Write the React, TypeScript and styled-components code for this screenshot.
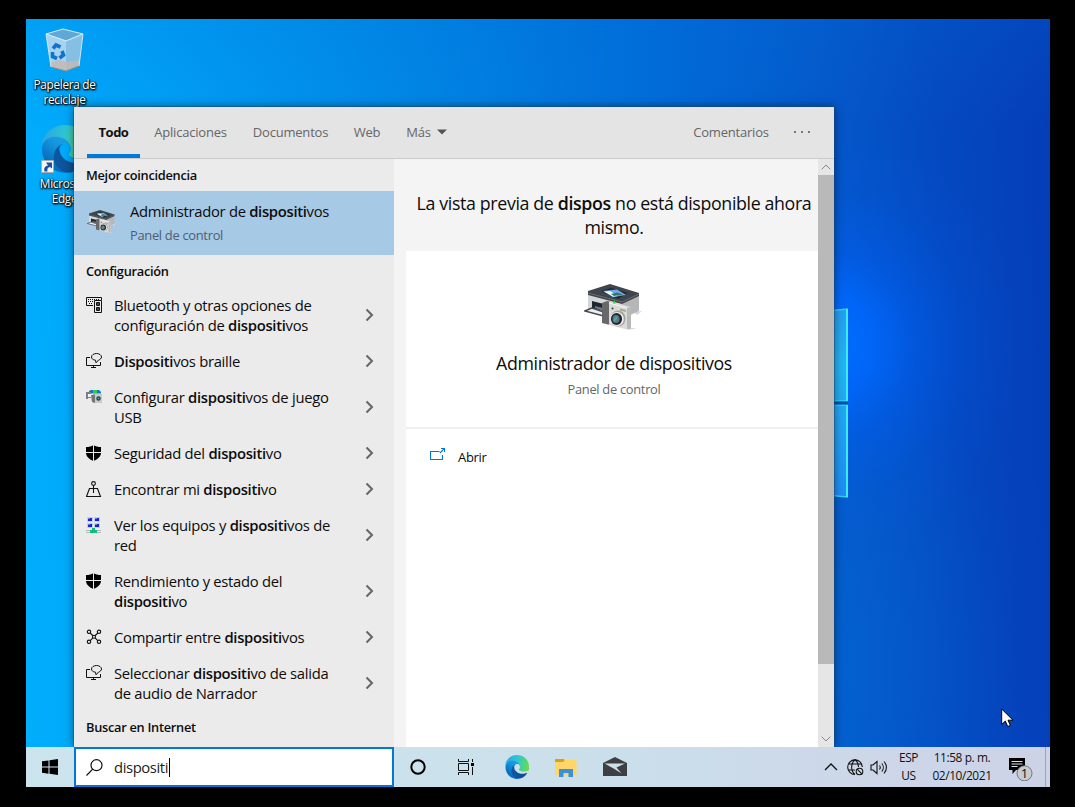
import React, { type ReactNode } from 'react';
import styled, { createGlobalStyle } from 'styled-components';

const Global = createGlobalStyle`
  *, *::before, *::after { box-sizing: border-box; }
  body { margin: 0; background: #000; }
  body, input { font-family: 'Open Sans', 'Noto Sans', sans-serif; }
`;

const Screen = styled.div`
  width: 1075px;
  height: 807px;
  padding: 19px 25px 20px 26px;
  background: #000;
  overflow: hidden;
`;

const Desktop = styled.main`
  position: relative;
  display: grid;
  grid-template-rows: 1fr 40px;
  width: 1024px;
  height: 768px;
  overflow: hidden;
`;

const Wallpaper = styled.section`
  position: relative;
  overflow: hidden;
  background:
    radial-gradient(ellipse 190px 210px at 805px 325px, rgba(0, 112, 255, 1), rgba(0, 104, 255, 0.85) 22%, rgba(0, 96, 245, 0.45) 45%, rgba(0, 90, 235, 0.15) 72%, rgba(0, 85, 225, 0) 100%),
    radial-gradient(ellipse 200px 330px at 790px 640px, rgba(4, 105, 212, 0.55), rgba(4, 100, 210, 0) 100%),
    linear-gradient(180deg, rgba(0, 110, 215, 0.18) 0, rgba(0, 120, 230, 0) 110px),
    linear-gradient(88deg, #00aefc 0%, #00a0f6 15%, #0088e6 38%, #006cd8 62%, #0456c9 80%, #0449c1 89%, #043db7 100%);
`;

const WindowsBeam = styled.svg`
  position: absolute;
  left: 780px;
  top: 280px;
`;

const IconColumn = styled.div`
  display: flex;
  flex-direction: column;
  gap: 18px;
  width: 77px;
  padding-top: 9px;
`;

const Shortcut = styled.div<{ $labelGap: number }>`
  display: flex;
  flex-direction: column;
  align-items: center;
  gap: ${p => p.$labelGap}px;
  position: relative;
`;

const ShortcutLabel = styled.span`
  width: 76px;
  text-align: center;
  color: #fff;
  font-size: 11.9px;
  line-height: 15px;
  letter-spacing: -0.35px;
  text-shadow: 1px 1px 2px #000, 0 1px 2px #000, 1px 0 1px rgba(0, 0, 0, 0.8), 0 0 2px rgba(0, 0, 0, 0.5);
`;

const SearchPanel = styled.section`
  position: absolute;
  left: 48px;
  top: 88px;
  display: grid;
  grid-template-rows: 52px 588px;
  width: 760px;
  height: 640px;
  background: #ebebeb;
  box-shadow: 0 0 0 1px rgba(30, 70, 110, 0.45), 0 0 9px rgba(0, 0, 0, 0.5);
  clip-path: inset(-12px -12px 0 -12px);
`;

const TabBar = styled.nav`
  display: flex;
  align-items: stretch;
  padding: 0 0 0 13px;
  background: #e4e4e4;
  border-bottom: 1px solid #cbcbcb;
`;

const Tab = styled.button<{ $active?: boolean; $width: number }>`
  display: flex;
  align-items: center;
  justify-content: center;
  gap: 6px;
  width: ${p => p.$width}px;
  padding: 3px 0 0;
  border: 0;
  border-bottom: 4px solid ${p => (p.$active ? '#0078d7' : 'transparent')};
  background: none;
  color: ${p => (p.$active ? '#111' : '#666')};
  font: ${p => (p.$active ? 700 : 400)} 13px 'Open Sans', sans-serif;
  line-height: 17px;
  letter-spacing: ${p => (p.$active ? -0.5 : -0.2)}px;
  white-space: nowrap;
`;

const TabSpacer = styled.div`
  flex: 1;
`;

const Body = styled.div`
  display: grid;
  grid-template-columns: 320px 424px 16px;
  overflow: hidden;
`;

const Results = styled.div`
  overflow: hidden;
  color: #0c0c0c;
`;

const GroupTitle = styled.h2`
  margin: 0;
  height: 32px;
  padding: 0 0 0 12px;
  font-size: 12.8px;
  font-weight: 600;
  line-height: 32px;
  letter-spacing: -0.28px;
  white-space: nowrap;
`;

const BestMatch = styled.div`
  display: grid;
  grid-template-columns: 32px 1fr;
  column-gap: 12px;
  height: 64px;
  padding: 9px 12px 0;
  background: #a6c9e6;
`;

const BestIcon = styled.div`
  padding: 10px 0 0 1px;
`;

const Line = styled.div`
  white-space: nowrap;
`;

const BestText = styled.div`
  font-size: 14.8px;
  line-height: 22px;
  letter-spacing: -0.3px;
`;

const Caption = styled.div`
  padding-top: 2px;
  color: #4d5f6e;
  font-size: 12.9px;
  line-height: 22px;
  white-space: nowrap;
`;

const Strong = styled.b`
  font-weight: 600;
`;

const Row = styled.div`
  display: grid;
  grid-template-columns: 16px 1fr 10px;
  column-gap: 12px;
  padding: 8px 19px 8px 12px;
  font-size: 14.8px;
  line-height: 20px;
  letter-spacing: -0.29px;
`;

const RowText = styled.div`
  min-width: 0;
`;

const RowIcon = styled.svg`
  margin-top: 2px;
`;

const RowChevron = styled.svg`
  align-self: center;
`;

const Preview = styled.div`
  padding-left: 12px;
  overflow: hidden;
  background: #f4f4f4;
`;

const PreviewInner = styled.div`
  display: flex;
  flex-direction: column;
  width: 416px;
  height: 100%;
  text-align: center;
  color: #0c0c0c;
`;

const Notice = styled.div`
  height: 92px;
  padding-top: 32px;
  font-size: 17.8px;
  line-height: 24px;
  letter-spacing: -0.36px;
`;

const Card = styled.div`
  display: flex;
  flex-direction: column;
  align-items: center;
  height: 178px;
  padding-top: 33px;
  background: #fff;
  border-bottom: 2px solid #f0f0f0;
`;

const CardIcon = styled.div`
  display: flex;
  margin-right: 3px;
`;

const CardTitle = styled.div`
  margin-top: 18px;
  font-size: 17.8px;
  line-height: 26px;
  letter-spacing: -0.37px;
  white-space: nowrap;
`;

const CardCaption = styled.div`
  margin-top: 3px;
  color: #666;
  font-size: 12.9px;
  line-height: 20px;
  letter-spacing: -0.3px;
`;

const Actions = styled.div`
  flex: 1;
  padding: 18px 24px;
  background: #fff;
`;

const Action = styled.div`
  display: flex;
  gap: 13px;
  font-size: 13px;
  line-height: 20px;
  letter-spacing: -0.3px;
`;

const ScrollTrack = styled.div`
  display: grid;
  grid-template-rows: 16px 489px 1fr 16px;
  justify-items: center;
  align-items: center;
  background: #e6e6e6;
`;

const ScrollThumb = styled.div`
  width: 16px;
  height: 489px;
  background: #b9b9b9;
`;

const Taskbar = styled.footer`
  position: relative;
  display: grid;
  grid-template-columns: 48px 320px 1fr auto;
  background: linear-gradient(90deg, #cbe4ee 0%, #cbe2ec 38%, #cbdeeb 60%, #cdd6e8 85%, #ccd3e6 100%);
`;

const StartButton = styled.div`
  display: grid;
  place-items: center;
`;

const SearchBox = styled.div`
  display: flex;
  align-items: center;
  padding: 0 0 0 10px;
  border: 2px solid #0078d7;
  background: #fff;
`;

const Query = styled.span`
  margin-left: 11px;
  padding-right: 1px;
  border-right: 1px solid #000;
  color: #222;
  font-size: 14.8px;
  line-height: 19px;
  letter-spacing: -0.4px;
`;

const Pinned = styled.div`
  display: grid;
  grid-template-columns: 48px 48px 53px 45px 54px;
  place-items: center;
`;

const Tray = styled.div`
  display: grid;
  grid-template-columns: 24px 24px 24px 35px 72px 43px 9px;
  place-items: center;
`;

const TrayText = styled.div`
  padding-bottom: 2px;
  color: #111;
  font-size: 11.9px;
  line-height: 18px;
  text-align: center;
  white-space: nowrap;
  letter-spacing: -0.4px;
`;

const DesktopEdge = styled.div`
  justify-self: end;
  width: 5px;
  height: 40px;
  border-left: 1px solid #9da5b8;
`;

const Cursor = styled.svg`
  position: absolute;
  left: 975px;
  top: 689px;
`;

function RecycleBin() {
  return (
    <svg width="40" height="44" viewBox="0 0 40 44">
      <path d="M1 6 18 1l20 5-17 7Z" fill="#5fa9d6" stroke="#d8e9f2" strokeWidth="1" />
      <path d="M1 6l20 7v30L6 39Z" fill="#a6d3ee" />
      <path d="M21 13l17-7-4 32-13 5Z" fill="#85bfe3" />
      <path d="M5 35l9-3 7 2 14-2-1 6-13 5L6 39Z" fill="#c3b9b5" opacity=".85" />
      <path d="M6 39l15 4 13-5" fill="none" stroke="#918b88" strokeWidth="1" />
      <path d="M1 6l20 7 17-7M1 6l5 33M38 6l-4 32" fill="none" stroke="#d8ecf7" strokeWidth=".9" />
      <g fill="none" stroke="#1471cc" strokeWidth="3.6">
        <path d="M8 20.500l3-3.500 4.500 2" />
        <path d="M17 23l1.500 4-4 3" />
        <path d="M12 30.500l-4.500-2 0-4.500" />
      </g>
    </svg>
  );
}

function EdgeLogo({ size }: { size: number }) {
  const id = 'edge' + size;
  return (
    <svg width={size} height={size} viewBox="0 0 256 256">
      <defs>
        <linearGradient id={id + 'a'} x1="60" y1="180" x2="240" y2="180" gradientUnits="userSpaceOnUse">
          <stop offset="0" stopColor="#0c59a4" />
          <stop offset="1" stopColor="#114a8b" />
        </linearGradient>
        <linearGradient id={id + 'b'} x1="150" y1="100" x2="45" y2="225" gradientUnits="userSpaceOnUse">
          <stop offset="0" stopColor="#1b9de2" />
          <stop offset=".3" stopColor="#1595df" />
          <stop offset="1" stopColor="#0067b8" />
        </linearGradient>
        <linearGradient id={id + 'c'} x1="10" y1="60" x2="250" y2="110" gradientUnits="userSpaceOnUse">
          <stop offset="0" stopColor="#2aa5e5" />
          <stop offset=".5" stopColor="#2fc8d2" />
          <stop offset="1" stopColor="#66db4f" />
        </linearGradient>
      </defs>
      <path fill={`url(#${id}a)`} d="M231 190c-3 2-7 3-11 5-11 4-23 6-35 6-47 0-87-32-87-73 0-11 6-22 16-27-43 2-54 46-54 72 0 74 68 81 83 81 8 0 20-2 27-5 31-11 51-29 64-51 2-4-1-9-3-8Z" />
      <path fill={`url(#${id}b)`} d="M106 241a79 79 0 0 1-23-21 81 81 0 0 1 30-120c3-2 9-4 16-4 11 0 21 5 27 14 4 5 7 12 7 19 0-1 24-79-79-79-43 0-79 41-79 77 0 20 4 39 12 56a128 128 0 0 0 156 66c-22 7-47 4-67-8Z" />
      <path fill={`url(#${id}c)`} d="M152 149c-1 1-3 3-3 7 0 3 2 7 6 9 19 13 54 12 54 12a77 77 0 0 0 39-11c24-14 8-38 8-48C255 70 216 0 128 0 56 0 1 57 0 127c0-36 36-65 79-65 4 0 24 0 42 10 16 8 25 18 31 29 6 10 8 24 8 29s-3 13-8 19Z" />
    </svg>
  );
}

const ShortcutArrow = styled.svg`
  position: absolute;
  left: 15px;
  top: 35px;
`;

function PrinterCamera({ width }: { width: number }) {
  return (
    <svg width={width} height={(width * 48) / 58} viewBox="0 0 58 48">
      <path d="M50 28l8-1-5 4ZM44 46l9-2-6 0Z" fill="#d6d6d6" />
      <path d="M4 8l36 11v15L4 25Z" fill="#d5d6d8" />
      <path d="M38 19l17-9v17L38 35Z" fill="#b4b6ba" />
      <path d="M4 7 26 0l29 9v3L38 20 4 11Z" fill="#3f454a" />
      <path d="M4 9l34 9 17-8" fill="none" stroke="#71777b" strokeWidth=".8" />
      <path d="M17 7l10-3 17 5-10 6Z" fill="#202b35" />
      <path d="M19 7l14-1.500 9 5.500-13 2Z" fill="#6ea8ee" />
      <path d="M20 7.500l6-.5 8 5-5 .8Z" fill="#e9f5fb" />
      <path d="M27 10l6-1.500 6 2-9 1.500Z" fill="#397662" />
      <path d="M8 17l12 3v7L8 24Z" fill="#20262e" />
      <path d="M11 22l8 2v3l-8-3Z" fill="#687888" />
      <path d="M.8 27l7-3 12 4v4Z" fill="#f0f0f0" stroke="#444a50" strokeWidth="1.4" />
      <path d="M18 19l5-2 4 1-1 23-8-2Z" fill="#66686a" />
      <path d="M25 18l2-.5 20 5.500v21.500l-4 1-18-4.500Z" fill="#dadad8" />
      <path d="M43 24l4-1v21.500l-4 1Z" fill="#b9b9b7" />
      <path d="M25 19l18 5" fill="none" stroke="#f6f6f4" />
      <path d="M36 24.500l6 1.500v2l-6-1.500Z" fill="#a8a88b" />
      <ellipse cx="34" cy="34.500" rx="7.500" ry="8" fill="#a2a3a4" />
      <ellipse cx="33" cy="35" rx="6.800" ry="7" fill="#eee" />
      <ellipse cx="32.500" cy="35" rx="5.600" ry="6" fill="#25292d" />
      <ellipse cx="32" cy="35" rx="3.500" ry="4" fill="#66757c" />
      <path d="M29.500 36l3-4 1 2-3 4Z" fill="#30b0bb" />
      <path d="M29 19.500l1.300-3.500 1.300 3.500Z" fill="#28e12f" />
      <circle cx="28.500" cy="24.500" r="1" fill="#37404a" />
    </svg>
  );
}

type IconName = 'keyboard' | 'narrator' | 'game' | 'shield' | 'find' | 'network' | 'share';

const glyphs: Record<IconName, ReactNode> = {
  keyboard: (
    <g fill="none" stroke="#111">
      <path d="M7 8.500H.5v-8h15V3" />
      <path d="M2 2.500h12M2 4.500h6M3 6.500h4" strokeDasharray="1 1" />
      <path d="M8.500 3.500h7v12h-7Z" />
      <path d="M10.500 5.500h3v3h-3ZM10.500 10.500h3v3h-3Z" />
      <path d="M11.500 6.500h1v1h-1ZM11.500 11.500h1v1h-1Z" />
    </g>
  ),
  narrator: (
    <g fill="none" stroke="#111">
      <path d="M4 4.500H.5v8h14V9M7.500 12.500v2M5 14.500h5" />
      <path d="M9.500 7.200C7 7 5.500 5.700 5.500 4c0-2 2.300-3.500 5-3.500s5 1.500 5 3.500c0 1.400-1.200 2.500-3 3.100L10 9.800Z" />
    </g>
  ),
  game: (
    <g>
      <path d="M1 3h14v3H1Z" fill="#9eb0c0" />
      <path d="M3 2l2-1h8l2 2v1H3Z" fill="#1277ce" />
      <path d="M7 1h4v3H7Z" fill="#29cf54" />
      <path d="M0 3h5v6H2v1H0Z" fill="#7b7f82" />
      <path d="M2 5h5v3H2Z" fill="#f2f3f4" />
      <path d="M5 6h4v8l-3-1Z" fill="#73777a" />
      <path d="M9 5h7v9H9Z" fill="#c9cbca" />
      <circle cx="12.500" cy="9.500" r="2.200" fill="#2c4349" />
      <circle cx="12.500" cy="9.500" r=".8" fill="#4fc0c8" />
    </g>
  ),
  shield: (
    <g>
      <path d="M7.500 0C9.500 1.600 12 2 15 2v5.500c0 4-3 6.500-7.500 8.500C3 14 0 11.500 0 7.500V2c3 0 5.500-.4 7.500-2Z" fill="#000" />
      <path d="M7.500 0v16M0 7.500h15" stroke="#ebebeb" strokeWidth="1" />
    </g>
  ),
  find: (
    <g fill="none" stroke="#111" strokeWidth="1.100">
      <circle cx="7.500" cy="2.500" r="1.900" />
      <path d="M7.500 4.500V12M3.500 7.500l-3 8h14l-3-8ZM5.500 7.500h4" />
    </g>
  ),
  network: (
    <g>
      {[[2, 1], [9, 1], [2, 7], [9, 7]].map(([x, y]) => (
        <g key={`${x}-${y}`}>
          <rect x={x - 1} y={y - 1} width="6" height="5" fill="#c3cdee" />
          <rect x={x} y={y} width="4" height="3" fill="#1726cc" />
          <rect x={x} y={y} width="2" height="1" fill="#6a85f5" />
        </g>
      ))}
      <path d="M0 13h15v1H0ZM0 15h15v1H0Z" fill="#b5bab8" />
      <path d="M6 11h3v2h2v3H4v-3h2Z" fill="#13bd7a" />
    </g>
  ),
  share: (
    <g fill="none" stroke="#111" strokeWidth="1.100">
      <path d="M4.200 4l7.600 7.600M11.800 4l-7.600 7.600" />
      <circle cx="3" cy="2.800" r="1.700" />
      <circle cx="13" cy="2.800" r="1.700" />
      <circle cx="3" cy="12.800" r="1.700" />
      <circle cx="13" cy="12.800" r="1.700" />
      <circle cx="8" cy="7.800" r="1.500" fill="#ebebeb" />
    </g>
  ),
};

const results: { icon: IconName; lines: ReactNode[] }[] = [
  { icon: 'keyboard', lines: ['Bluetooth y otras opciones de', <>configuración de <Strong>dispositi</Strong>vos</>] },
  { icon: 'narrator', lines: [<><Strong>Dispositi</Strong>vos braille</>] },
  { icon: 'game', lines: [<>Configurar <Strong>dispositi</Strong>vos de juego</>, 'USB'] },
  { icon: 'shield', lines: [<>Seguridad del <Strong>dispositi</Strong>vo</>] },
  { icon: 'find', lines: [<>Encontrar mi <Strong>dispositi</Strong>vo</>] },
  { icon: 'network', lines: [<>Ver los equipos y <Strong>dispositi</Strong>vos de</>, 'red'] },
  { icon: 'shield', lines: ['Rendimiento y estado del', <><Strong>dispositi</Strong>vo</>] },
  { icon: 'share', lines: [<>Compartir entre <Strong>dispositi</Strong>vos</>] },
  { icon: 'narrator', lines: [<>Seleccionar <Strong>dispositi</Strong>vo de salida</>, 'de audio de Narrador'] },
];

function SearchFlyout() {
  return (
    <SearchPanel>
      <TabBar>
        <Tab $active $width={53}>Todo</Tab>
        <Tab $width={101}>Aplicaciones</Tab>
        <Tab $width={99}>Documentos</Tab>
        <Tab $width={54}>Web</Tab>
        <Tab $width={65}>
          Más
          <svg width="10" height="6" viewBox="0 0 10 6"><path d="M0 .5h10l-5 5Z" fill="#555" /></svg>
        </Tab>
        <TabSpacer />
        <Tab $width={76}>Comentarios</Tab>
        <Tab $width={65}>
          <svg width="16" height="2" viewBox="0 0 16 2"><path d="M0 0h2v2H0ZM7 0h2v2h-2ZM14 0h2v2h-2Z" fill="#777" /></svg>
        </Tab>
      </TabBar>
      <Body>
        <Results>
          <GroupTitle>Mejor coincidencia</GroupTitle>
          <BestMatch>
            <BestIcon><PrinterCamera width={29} /></BestIcon>
            <BestText>
              <Line>Administrador de <Strong>dispositi</Strong>vos</Line>
              <Caption>Panel de control</Caption>
            </BestText>
          </BestMatch>
          <GroupTitle>Configuración</GroupTitle>
          {results.map((r, i) => (
            <Row key={i}>
              <RowIcon width="16" height="16" viewBox="0 0 16 16">{glyphs[r.icon]}</RowIcon>
              <RowText>{r.lines.map((l, j) => <Line key={j}>{l}</Line>)}</RowText>
              <RowChevron width="10" height="14" viewBox="0 0 10 14">
                <path d="M1.500 1.500 7 7 1.500 12.500" fill="none" stroke="#666" strokeWidth="2" />
              </RowChevron>
            </Row>
          ))}
          <GroupTitle>Buscar en Internet</GroupTitle>
        </Results>
        <Preview>
          <PreviewInner>
            <Notice>
              <Line>La vista previa de <Strong>dispos</Strong> no está disponible ahora</Line>
              <Line>mismo.</Line>
            </Notice>
            <Card>
              <CardIcon><PrinterCamera width={58} /></CardIcon>
              <CardTitle>Administrador de dispositivos</CardTitle>
              <CardCaption>Panel de control</CardCaption>
            </Card>
            <Actions>
              <Action>
                <svg width="15" height="15" viewBox="0 0 15 15">
                  <path d="M9.500 4.500H.5v8h12V8M10 6l4-4M11 1.500h3.500V5" fill="none" stroke="#0078d7" strokeWidth="1.100" />
                </svg>
                Abrir
              </Action>
            </Actions>
          </PreviewInner>
        </Preview>
        <ScrollTrack>
          <svg width="10" height="6" viewBox="0 0 10 6"><path d="M.7 5.300 5 1l4.300 4.300" fill="none" stroke="#888" /></svg>
          <ScrollThumb />
          <span />
          <svg width="10" height="6" viewBox="0 0 10 6"><path d="M.7.7 5 5 9.300.7" fill="none" stroke="#888" /></svg>
        </ScrollTrack>
      </Body>
    </SearchPanel>
  );
}

export default function App() {
  return (
    <Screen>
      <Global />
      <Desktop>
        <Wallpaper>
          <WindowsBeam width="60" height="210" viewBox="0 0 60 210">
            <defs>
              <linearGradient id="pane" x1="0" y1="0" x2="0" y2="1">
                <stop offset="0" stopColor="#259df0" />
                <stop offset=".3" stopColor="#22b4f2" />
                <stop offset="1" stopColor="#1e8df5" />
              </linearGradient>
            </defs>
            <path d="M0 14 41 10v92H0ZM0 106h41v92L0 194Z" fill="url(#pane)" stroke="#2fd4f6" strokeWidth="1.500" />
            <path d="M41 10v92M41 106v92" stroke="#42f0fa" strokeWidth="1.800" />
            <path d="M0 104h42" stroke="#0450b4" strokeWidth="3" />
          </WindowsBeam>
          <IconColumn>
            <Shortcut $labelGap={5}>
              <RecycleBin />
              <ShortcutLabel>Papelera de reciclaje</ShortcutLabel>
            </Shortcut>
            <Shortcut $labelGap={3}>
              <EdgeLogo size={48} />
              <ShortcutArrow width="13" height="13" viewBox="0 0 13 13">
                <path d="M.5.500h12v12H.5Z" fill="#f6f6f6" stroke="#aaa" />
                <path d="M3.500 11.500C2.500 8 4 6 7 5.500L5 2.500H11v6L9 7C6.500 7.500 6 9 6.500 11.500Z" fill="#1d4f9c" />
              </ShortcutArrow>
              <ShortcutLabel>Microsoft Edge</ShortcutLabel>
            </Shortcut>
          </IconColumn>
        </Wallpaper>
        <Taskbar>
          <StartButton>
            <svg width="16" height="16" viewBox="0 0 16 16">
              <path d="M0 2.300 6.500 1.400V7.500H0ZM7.500 1.200 16 0v7.500H7.500ZM0 8.500h6.500v6.200L0 13.700ZM7.500 8.500H16V16l-8.500-1.200Z" fill="#000" />
            </svg>
          </StartButton>
          <SearchBox>
            <svg width="17" height="17" viewBox="0 0 17 17">
              <circle cx="10.500" cy="6.200" r="5.500" fill="none" stroke="#111" strokeWidth="1.200" />
              <path d="M6.700 10.200.5 16.500" stroke="#111" strokeWidth="1.200" />
            </svg>
            <Query>dispositi</Query>
          </SearchBox>
          <Pinned>
            <svg width="16" height="16" viewBox="0 0 16 16"><circle cx="8" cy="8" r="6.700" fill="none" stroke="#000" strokeWidth="2" /></svg>
            <svg width="17" height="16" viewBox="0 0 17 16">
              <path d="M.5 0v2.500h10V0M.5 16v-2.500h10V16M.5 4.500h10v7H.5ZM14.500 0v3M14.500 8v8" fill="none" stroke="#111" />
              <rect x="13" y="4" width="3" height="3" fill="#000" />
            </svg>
            <EdgeLogo size={24} />
            <svg width="22" height="19" viewBox="0 0 22 19">
              <path d="M0 1h9l1 2v4H0Z" fill="#dd9f13" />
              <path d="M0 4h8l2-2h11.500v15H0Z" fill="#ffd667" />
              <path d="M4 19v-8h14v8h-4.500v-4h-5v4Z" fill="#3b8fdb" />
            </svg>
            <svg width="24" height="20" viewBox="0 0 24 20">
              <path d="M0 6 12 0l12 6v13H0Z" fill="#3c4043" />
              <path d="M1.500 6.500h20.500l-8.500 4 5 6-7-4.500Z" fill="#cbdeea" />
            </svg>
          </Pinned>
          <Tray>
            <svg width="14" height="8" viewBox="0 0 14 8"><path d="M1 7 7 1l6 6" fill="none" stroke="#111" strokeWidth="1.300" /></svg>
            <svg width="17" height="17" viewBox="0 0 17 17" fill="none" stroke="#111" strokeWidth="1.100">
              <path d="M8 15.500A7.300 7.300 0 1 1 15.300 8M8 15.500C3.500 12 3.500 4 8 .8M8 .8c3 2 3.500 5 3.500 7.200M1.500 5h13M1.500 11H8" />
              <circle cx="12.500" cy="12.500" r="3.300" />
              <path d="M10.200 10.200l4.600 4.600" />
            </svg>
            <svg width="18" height="15" viewBox="0 0 18 15" fill="none" stroke="#111" strokeWidth="1.100">
              <path d="M1 5h2l4-3.500v12L3 10H1Z" />
              <path d="M9.500 5.500c1 1.300 1 2.700 0 4M11.800 3.500c2 2.300 2 5.700 0 8M14 1.500c3.200 3.500 3.200 8.500 0 12" />
            </svg>
            <TrayText>ESP<br />US</TrayText>
            <TrayText>11:58 p. m.<br />02/10/2021</TrayText>
            <svg width="26" height="28" viewBox="0 0 26 28">
              <path d="M2 5h16v12H9l-3.500 4v-4H2Z" fill="#000" />
              <path d="M4.500 8.500h11M4.500 11h11M4.500 13.500h6" stroke="#dce1ec" />
              <circle cx="17.500" cy="20.300" r="7.500" fill="#c7ccd2" stroke="#777" />
              <text x="17.500" y="25" textAnchor="middle" fontFamily="Open Sans" fontSize="13" fill="#111">1</text>
            </svg>
            <DesktopEdge />
          </Tray>
        </Taskbar>
        <SearchFlyout />
        <Cursor width="13" height="20" viewBox="0 0 13 20">
          <path d="M.7 1v15.500l3.600-3.400 2.400 5.400 2.700-1.100-2.400-5.200h5Z" fill="#fff" stroke="#000" />
        </Cursor>
      </Desktop>
    </Screen>
  );
}
